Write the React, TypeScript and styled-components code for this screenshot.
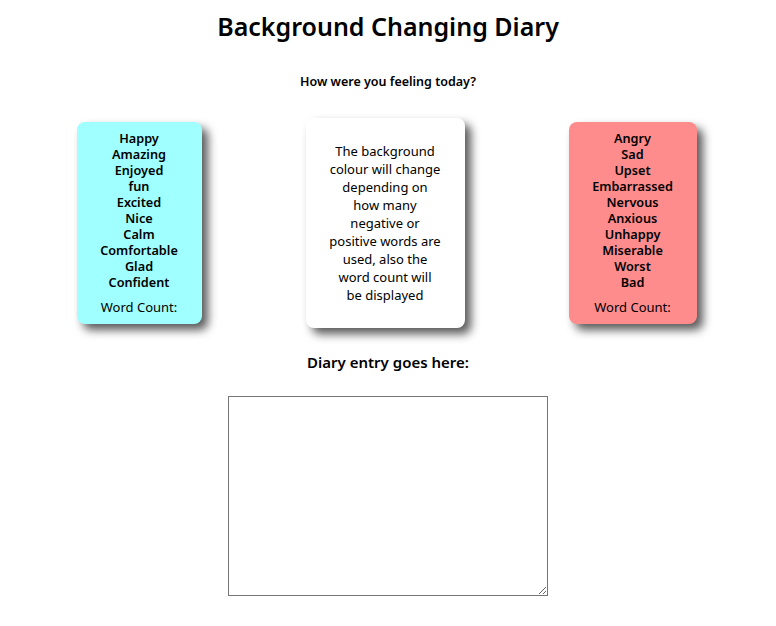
import React from "react";
import styled, { createGlobalStyle } from "styled-components";

const Global = createGlobalStyle`
  body {
    margin: 8px;
    font-family: "Noto Sans", "Open Sans", sans-serif;
    color: #000;
    background: #fff;
  }
`;

const Title = styled.h1`
  text-align: center;
  font-size: 25px;
  font-weight: 600;
  margin: 0;
  line-height: 36px;
`;

const Question = styled.h4`
  text-align: center;
  font-size: 12.5px;
  font-weight: 600;
  margin: 29px 0 0;
  line-height: 18px;
`;

const Row = styled.div`
  display: flex;
  justify-content: center;
  align-items: center;
  gap: 104px;
  margin-top: 27px;
  padding-right: 3px;
`;

const WordCard = styled.div<{ $bg: string; $w: number }>`
  width: ${(p) => p.$w}px;
  box-sizing: border-box;
  background: ${(p) => p.$bg};
  border-radius: 8px;
  box-shadow: 6px 6px 10px rgba(0, 0, 0, 0.65);
  padding: 8px 0 9px;
  text-align: center;
`;

const Word = styled.div`
  font-size: 12.7px;
  font-weight: 600;
  line-height: 16px;
`;

const Count = styled.div`
  font-size: 13px;
  line-height: 16px;
  margin-top: 9px;
`;

const InfoCard = styled.div`
  width: 159px;
  box-sizing: border-box;
  background: #fff;
  border-radius: 8px;
  box-shadow: 6px 6px 10px rgba(0, 0, 0, 0.65);
  padding: 24px 20px;
  text-align: center;
  font-size: 13px;
  line-height: 18px;
`;

const InfoLine = styled.div`
  white-space: nowrap;
`;

const SubHeading = styled.h3`
  text-align: center;
  font-size: 15px;
  font-weight: 600;
  margin: 23px 0 0;
  line-height: 22px;
`;

const EntryWrap = styled.div`
  display: flex;
  justify-content: center;
  margin-top: 23px;
`;

const Entry = styled.textarea`
  width: 320px;
  height: 200px;
  box-sizing: border-box;
  border: 1px solid #767676;
  margin: 0;
  padding: 2px;
`;

const positive = ["Happy", "Amazing", "Enjoyed", "fun", "Excited", "Nice", "Calm", "Comfortable", "Glad", "Confident"];
const negative = ["Angry", "Sad", "Upset", "Embarrassed", "Nervous", "Anxious", "Unhappy", "Miserable", "Worst", "Bad"];
const infoLines = [
  "The background",
  "colour will change",
  "depending on",
  "how many",
  "negative or",
  "positive words are",
  "used, also the",
  "word count will",
  "be displayed",
];

export default function App() {
  return (
    <>
      <Global />
      <Title>Background Changing Diary</Title>
      <Question>How were you feeling today?</Question>
      <Row>
        <WordCard $bg="#a0ffff" $w={125}>
          {positive.map((w) => (
            <Word key={w}>{w}</Word>
          ))}
          <Count>Word Count:</Count>
        </WordCard>
        <InfoCard>
          {infoLines.map((l) => (
            <InfoLine key={l}>{l}</InfoLine>
          ))}
        </InfoCard>
        <WordCard $bg="#ff8c8c" $w={128}>
          {negative.map((w) => (
            <Word key={w}>{w}</Word>
          ))}
          <Count>Word Count:</Count>
        </WordCard>
      </Row>
      <SubHeading>Diary entry goes here:</SubHeading>
      <EntryWrap>
        <Entry />
      </EntryWrap>
    </>
  );
}
